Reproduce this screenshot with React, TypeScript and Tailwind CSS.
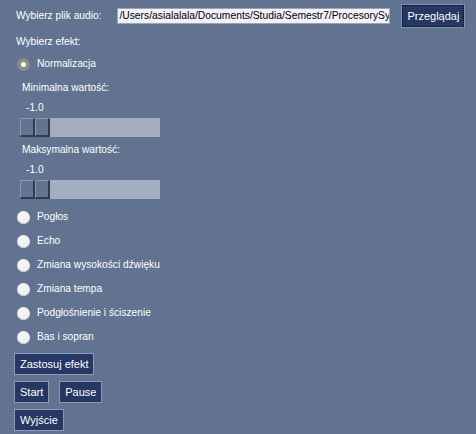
import React from 'react'

function Radio({ label, checked }: { label: string; checked?: boolean }) {
  return (
    <div className="flex h-6 items-center">
      <span
        className={
          checked
            ? 'ml-[17px] flex h-[13px] w-[13px] items-center justify-center rounded-full bg-[#8c8c8c]'
            : 'ml-[17px] h-[13px] w-[13px] rounded-full bg-[#f4f4f4] shadow-[inset_0_-1px_1px_#c8c8c8]'
        }
      >
        {checked && <span className="h-[5px] w-[5px] rounded-full bg-white" />}
      </span>
      <span className="ml-[7px]">{label}</span>
    </div>
  )
}

function Slider({ label }: { label: string }) {
  return (
    <div className="pl-5">
      <div className="ml-[2px] h-5 leading-5">{label}</div>
      <div className="ml-[6px] h-5 leading-5">-1.0</div>
      <div className="flex h-[19px] w-[140px] bg-[#a3afbf]">
        <span className="h-full w-[15px] border-l border-t border-[#8797ae] border-b-2 border-r-2 border-b-[#2e3a4e] border-r-[#2e3a4e] bg-[#62748f]" />
        <span className="h-full w-[15px] border-l border-t border-[#8797ae] border-b-2 border-r-2 border-b-[#2e3a4e] border-r-[#2e3a4e] bg-[#62748f]" />
      </div>
    </div>
  )
}

function Btn({ children, focus }: { children: React.ReactNode; focus?: boolean }) {
  return (
    <button
      className={
        focus
          ? 'h-[22px] border border-dotted border-[#0a0f1f] bg-[#253763] px-[4px] text-[11px] text-white shadow-[0_0_0_1px_#8090b0]'
          : 'h-[22px] border border-[#8d9bb8] bg-[#253763] px-[5px] text-[11px] text-white'
      }
    >
      {children}
    </button>
  )
}

export default function App() {
  return (
    <div
      className="h-[434px] w-[476px] bg-[#617390] text-[10.2px] text-white"
      style={{ fontFamily: '"Liberation Sans", Arial, sans-serif' }}
    >
      <div className="flex h-[32px] items-center pl-4">
        <span>Wybierz plik audio:</span>
        <div className="ml-[16px] h-[16px] w-[273px] overflow-hidden whitespace-nowrap border border-[#9aa4b4] bg-[#f0f2f7] pl-[1px] text-[10.3px] leading-[14px] text-black">
          /Users/asialalala/Documents/Studia/Semestr7/ProcesorySy
        </div>
        <div className="ml-[12px]">
          <Btn focus>Przeglądaj</Btn>
        </div>
      </div>
      <div className="h-[20px] pl-4 leading-5">Wybierz efekt:</div>
      <Radio label="Normalizacja" checked />
      <div className="h-[2px]" />
      <Slider label="Minimalna wartość:" />
      <div className="h-[3px]" />
      <Slider label="Maksymalna wartość:" />
      <div className="h-[6px]" />
      <Radio label="Pogłos" />
      <Radio label="Echo" />
      <Radio label="Zmiana wysokości dźwięku" />
      <Radio label="Zmiana tempa" />
      <Radio label="Podgłośnienie i ściszenie" />
      <Radio label="Bas i sopran" />
      <div className="flex flex-col gap-[6px] pl-[14px] pt-[4px]">
        <div>
          <Btn>Zastosuj efekt</Btn>
        </div>
        <div className="flex gap-[10px]">
          <Btn>Start</Btn>
          <Btn>Pause</Btn>
        </div>
        <div>
          <Btn>Wyjście</Btn>
        </div>
      </div>
    </div>
  )
}
